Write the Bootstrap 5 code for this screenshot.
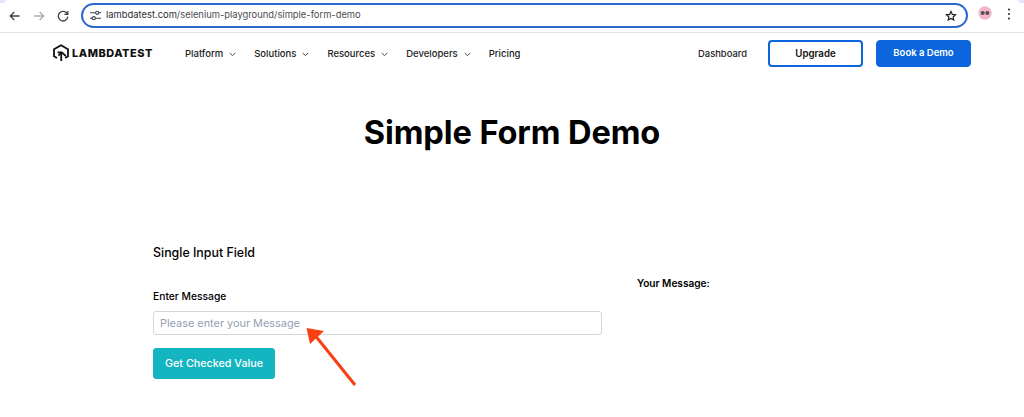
<!DOCTYPE html>
<html lang="en">
<head>
<meta charset="utf-8">
<title>Simple Form Demo</title>
<link href="https://cdn.jsdelivr.net/npm/bootstrap@5.3.0/dist/css/bootstrap.min.css" rel="stylesheet">
<style>
html,body{height:417px;overflow:hidden;background:#fff}
body{font-family:Inter,"Liberation Sans",sans-serif;color:#000;position:relative}
.chrome-bar{height:33px;background:#fff;border-bottom:1px solid #e3e5e8;padding:4px 0 0 7px;position:relative}
.chrome-tint{position:absolute;top:0;left:0;right:0;height:3px;background:#dfe9fb}
.chrome-tint-gap{position:absolute;top:0;left:5px;right:5px;height:3px;background:#fff;border-radius:3px 3px 0 0}
.nav-ico{width:16px;height:16px;margin-top:4px;flex:none}
.back-i{margin-right:8px}.fwd-i{margin-right:8px}.rel-i{margin-right:10px}
.url-box{width:887px;height:25px;border:2px solid #2d68cf;border-radius:13px;padding:0 0 0 6px;font-size:9.4px;color:#2a2d31;margin-top:-1px;flex:none}
.url-box>span{margin-left:4px}
.url-dim{color:#4a4d52}
.top-nav{height:40px;padding-left:53px;padding-right:53px}
.brand-txt{font-weight:800;font-size:10.9px;letter-spacing:.55px;margin-left:3px;width:113px;color:#111}
.menu-it{font-size:9.5px;font-weight:500;color:#222;margin-right:18px;white-space:nowrap;padding-top:2px}
.menu-it svg{margin-left:6px}
.btn-up,.btn-demo{font-size:9.7px;font-weight:600;height:27px;width:95px;padding:0;border-radius:4px;line-height:24px}
.btn-up{border:2px solid #0b65dc;color:#111;background:#fff;margin-left:21px}
.btn-demo{background:#0b65dc;border:1px solid #0b65dc;color:#fff;margin-left:13px;font-size:9.5px}
.dash-it{font-size:9.4px;font-weight:500;color:#222;padding-top:2px}
.page-title{font-size:32.6px;font-weight:700;text-align:center;margin:0;padding-top:40px;line-height:38px;letter-spacing:-.1px}
.form-wrap{padding-left:153px;margin-top:93px}
.form-side{width:449px}
.side-title{font-size:12.4px;font-weight:500;line-height:15px;margin:0 0 29px;padding-top:1px}
.lbl{font-size:10.3px;font-weight:500;line-height:14px;margin:0 0 8px;display:block}
.inp{height:24px;border:1px solid #d3d6da;border-radius:3px;font-size:10.9px;padding:0 6px;box-shadow:none;font-family:inherit}
.inp::placeholder{color:#94a0b4;opacity:1}
.go-btn{background:#13b5c1;border:1px solid #13b5c1;color:#fff;width:122px;height:31px;padding:1px 0 0;font-size:10.75px;font-weight:500;border-radius:3px;margin-top:13px}
.msg-side{margin-left:35px;padding-top:32px;font-size:10.1px;font-weight:600;line-height:14px}
.arrow-over{position:absolute;left:300px;top:320px;width:70px;height:75px}
</style>
</head>
<body>
<div class="chrome-bar d-flex align-items-start">
  <div class="chrome-tint"></div><div class="chrome-tint-gap"></div>
  <svg class="nav-ico back-i" viewBox="0 0 16 16" fill="none" stroke="#3c4043" stroke-width="1.3"><path d="M12.500 8H3.400M7.300 4 3.200 8l4.100 4"/></svg>
  <svg class="nav-ico fwd-i" viewBox="0 0 16 16" fill="none" stroke="#a9acb0" stroke-width="1.3"><path d="M3 8h9.400M8.600 4 12.700 8l-4.100 4"/></svg>
  <svg class="nav-ico rel-i" viewBox="0 0 16 16" fill="none" stroke="#3c4043" stroke-width="1.3"><path d="M12.400 6.200A4.800 4.800 0 1 0 12.800 8.600"/><path d="M12.800 3v3.400H9.400"/></svg>
  <div class="url-box d-flex align-items-center position-relative">
    <svg width="13" height="13" viewBox="0 0 13 13" fill="none" stroke="#3c4043" stroke-width="1.1"><path d="M1 3.800h5.400M10 3.800h2M1 9.200h2M6.600 9.200H12"/><circle cx="8.200" cy="3.800" r="1.600"/><circle cx="4.800" cy="9.200" r="1.600"/></svg>
    <span>lambdatest.com<span class="url-dim">/selenium-playground/simple-form-demo</span></span>
    <svg class="ms-auto" style="margin-right:9px" width="12" height="12" viewBox="0 0 24 24" fill="none" stroke="#222" stroke-width="2.400"><path d="m12 3 2.700 5.900 6.300.7-4.700 4.300 1.300 6.300L12 17.100l-5.600 3.100 1.300-6.300L3 9.600l6.300-.7z"/></svg>
  </div>
  <svg style="margin:2px 0 0 10px;flex:none" width="14" height="14" viewBox="0 0 15 15"><circle cx="7.500" cy="7.500" r="7.200" fill="#f3b6c8"/><circle cx="5" cy="7.500" r="2.200" fill="#5a5054"/><circle cx="10" cy="7.500" r="2.200" fill="#5a5054"/></svg>
  <svg style="margin:3px 0 0 12px;flex:none" width="10" height="14" viewBox="0 0 10 14" fill="#333"><circle cx="5" cy="2.500" r="1.100"/><circle cx="5" cy="7" r="1.100"/><circle cx="5" cy="11.500" r="1.100"/></svg>
</div>
<nav class="top-nav d-flex align-items-center">
  <svg width="16" height="18" viewBox="0 0 16 18" fill="none" stroke="#111" stroke-width="1.800"><path d="M4 14 1 12.200V5.300L8 1.200l7 4.100v6.900L12.200 14"/><path d="M8.200 17V8M4.500 8.300h4.300l4 3.700"/><path d="M5.400 11.600 8.200 8.500"/></svg>
  <span class="brand-txt">LAMBDATEST</span>
  <span class="menu-it">Platform<svg width="7" height="5" viewBox="0 0 7 5" fill="none" stroke="#444" stroke-width="1"><path d="m.8 1 2.700 2.700L6.200 1"/></svg></span>
  <span class="menu-it">Solutions<svg width="7" height="5" viewBox="0 0 7 5" fill="none" stroke="#444" stroke-width="1"><path d="m.8 1 2.700 2.700L6.200 1"/></svg></span>
  <span class="menu-it">Resources<svg width="7" height="5" viewBox="0 0 7 5" fill="none" stroke="#444" stroke-width="1"><path d="m.8 1 2.700 2.700L6.200 1"/></svg></span>
  <span class="menu-it">Developers<svg width="7" height="5" viewBox="0 0 7 5" fill="none" stroke="#444" stroke-width="1"><path d="m.8 1 2.700 2.700L6.200 1"/></svg></span>
  <span class="menu-it">Pricing</span>
  <span class="dash-it ms-auto">Dashboard</span>
  <button type="button" class="btn btn-up">Upgrade</button>
  <button type="button" class="btn btn-demo">Book a Demo</button>
</nav>
<h1 class="page-title">Simple Form Demo</h1>
<div class="form-wrap d-flex">
  <div class="form-side">
    <h2 class="side-title">Single Input Field</h2>
    <label class="lbl" for="msg">Enter Message</label>
    <input id="msg" class="form-control inp" type="text" placeholder="Please enter your Message">
    <button type="button" class="btn go-btn">Get Checked Value</button>
  </div>
  <div class="msg-side">Your Message:</div>
</div>
<svg class="arrow-over" viewBox="0 0 70 75"><path d="M55 65 14 14" stroke="#fa3f14" stroke-width="3" fill="none"/><path d="M6.500 8 24 11 10 24z" fill="#fa3f14"/></svg>
<script src="https://cdn.jsdelivr.net/npm/bootstrap@5.3.0/dist/js/bootstrap.bundle.min.js"></script>
</body>
</html>
